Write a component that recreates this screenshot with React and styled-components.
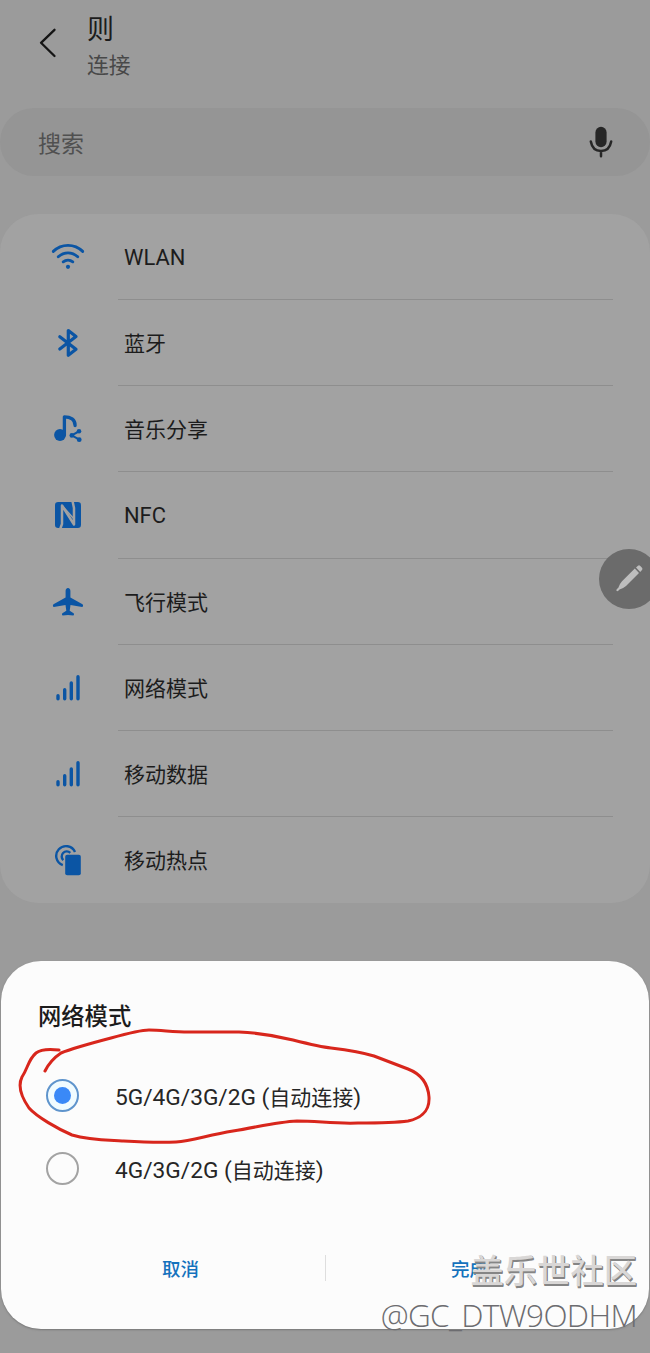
import styled, { createGlobalStyle } from "styled-components";

const BLUE = "#0b55a4";

const items = [
  { label: "WLAN", Icon: WifiIcon, latin: true },
  { label: "蓝牙", Icon: BluetoothIcon },
  { label: "音乐分享", Icon: MusicShareIcon },
  { label: "NFC", Icon: NfcIcon, latin: true },
  { label: "飞行模式", Icon: PlaneIcon },
  { label: "网络模式", Icon: SignalIcon },
  { label: "移动数据", Icon: SignalIcon },
  { label: "移动热点", Icon: HotspotIcon },
];

export default function App() {
  return (
    <Screen>
      <GlobalStyle />
      <Header>
        <BackIcon />
        <div>
          <Title>则</Title>
          <Subtitle>连接</Subtitle>
        </div>
      </Header>
      <SearchBar>
        <span>搜索</span>
        <MicIcon />
      </SearchBar>
      <List>
        {items.map(({ label, Icon, latin }) => (
          <Row key={label}>
            <IconBox>
              <Icon />
            </IconBox>
            <RowLabel $latin={latin}>{label}</RowLabel>
          </Row>
        ))}
      </List>
      <Dialog>
        <DialogTitle>网络模式</DialogTitle>
        <Option>
          <Radio $checked />
          <span>
            5G/4G/3G/2G (<small>自动连接</small>)
          </span>
        </Option>
        <Option>
          <Radio />
          <span>
            4G/3G/2G (<small>自动连接</small>)
          </span>
        </Option>
        <Actions>
          <Action>取消</Action>
          <Divider />
          <Action>完成</Action>
        </Actions>
        <Marker />
      </Dialog>
      <EditBubble>
        <PenIcon />
      </EditBubble>
      <Watermark>
        <WatermarkName>盖乐世社区</WatermarkName>
        <WatermarkUser>@GC_DTW9ODHM</WatermarkUser>
      </Watermark>
    </Screen>
  );
}

function BackIcon() {
  return (
    <svg width="18" height="30" viewBox="0 0 18 30" fill="none" stroke="#151515" strokeWidth="2.3" strokeLinecap="round" strokeLinejoin="round">
      <path d="M15.500 1.800 2 14.800 15.500 28" />
    </svg>
  );
}

function MicIcon() {
  return (
    <svg width="24" height="32" viewBox="0 0 24 32" fill="none">
      <rect x="6.400" y="0.800" width="11.200" height="20.400" rx="5.600" fill="#262626" />
      <path d="M1.800 15.500C3 22 7 25 12 25s9-3 10.200-9.500M12 25v5.300" stroke="#262626" strokeWidth="2.500" strokeLinecap="round" />
    </svg>
  );
}

function WifiIcon() {
  return (
    <svg width="34" height="28" viewBox="0 0 34 28" fill="none" stroke={BLUE} strokeWidth="2.900" strokeLinecap="round">
      <path d="M2.300 8.400C10.500.4 23.500.4 31.700 8.400" />
      <path d="M7.300 13.800C13 8.600 21 8.600 26.700 13.800" />
      <path d="M12.200 18.800C15 16.600 19 16.600 21.800 18.800" />
      <circle cx="17" cy="23.800" r="2.100" fill={BLUE} stroke="none" />
    </svg>
  );
}

function BluetoothIcon() {
  return (
    <svg width="24" height="30" viewBox="0 0 24 30" fill="none" stroke={BLUE} strokeWidth="3.200" strokeLinecap="round" strokeLinejoin="round">
      <path d="M3.800 8.800 20 21.300 12.300 27.300V2.500L20 8.500 3.800 21" />
    </svg>
  );
}

function MusicShareIcon() {
  return (
    <svg width="30" height="30" viewBox="0 0 30 30" fill="none" stroke={BLUE}>
      <circle cx="7" cy="21" r="5.900" fill={BLUE} stroke="none" />
      <path d="M11.400 21V2.800C17.500 2.800 22.300 5.500 22.100 11.500" strokeWidth="3.300" strokeLinejoin="round" strokeLinecap="round" />
      <path d="M26 17.300 18.800 21.300 26.300 25.600" strokeWidth="2.100" />
      <g fill={BLUE} stroke="none">
        <circle cx="26" cy="17.300" r="2.300" />
        <circle cx="18.800" cy="21.400" r="2.300" />
        <circle cx="26.200" cy="25.700" r="2.400" />
      </g>
    </svg>
  );
}

function NfcIcon() {
  return (
    <svg width="28" height="28" viewBox="0 0 28 28">
      <rect x="1" y="1" width="26" height="26" rx="3.200" fill={BLUE} />
      <path d="M6.200 28 8 23V4.500L20 23.500V7L18.500 0" fill="none" stroke="#a2a2a2" strokeWidth="2.500" strokeLinejoin="round" />
      <path d="M8 4.500 20 18" fill="none" stroke="#a2a2a2" strokeWidth="1.500" />
    </svg>
  );
}

function PlaneIcon() {
  return (
    <svg width="32" height="30" viewBox="0 0 32 30" fill={BLUE}>
      <path d="M16 1c-1.500 0-2.400 1.400-2.400 3v6.600L1.500 17.300c-.9.600-.7 2.700.3 2.600l11.700-1.900.8 5.800-3.900 2.500c-.7.500-.5 2.200.3 2.100l5.300-.5 5.300.5c.8.100 1-1.600.3-2.100L17.700 23.800l.8-5.800 11.700 1.900c1 .1 1.200-2 .3-2.600l-12.100-6.700V4c0-1.600-.9-3-2.400-3Z" />
    </svg>
  );
}

function SignalIcon() {
  return (
    <svg width="26" height="28" viewBox="0 0 26 28" stroke={BLUE} strokeWidth="3.400" strokeLinecap="round">
      <path d="M3 24.800V21.800M9.700 24.800V15.800M16.300 24.800V9M23 24.800V2.800" />
    </svg>
  );
}

function HotspotIcon() {
  return (
    <svg width="28" height="32" viewBox="0 0 28 32" fill="none" stroke={BLUE}>
      <path d="M8.800 21.200A9.800 9.800 0 1 1 21 8" strokeWidth="2.400" />
      <path d="M9.300 16.200A5 5 0 1 1 16.300 8.800" strokeWidth="2.400" />
      <rect x="11.200" y="10.800" width="15.600" height="20.400" rx="2" fill={BLUE} stroke="none" />
    </svg>
  );
}

function PenIcon() {
  return (
    <svg width="30" height="30" viewBox="0 0 30 30" fill="#bebebe">
      <path d="M20.800 4.600 25 9 12 22Q9.500 24.200 5.500 25.600L3.800 27.200 2.300 26.700 2.800 25 4.200 24Q5.500 20 8 17.300Z" />
      <path d="M22 3.500 24 1.700Q25.200.9 26.300 2L28 3.800Q29 5 28 6L26.200 7.900Z" />
    </svg>
  );
}

// hand-drawn circle round the first option
function Marker() {
  return (
    <MarkerSvg viewBox="0 0 420 124">
      <path
        d="M27 46C31 38 37 32 43 28C55 23 74 18 93 13C111 8 122 5 131 5C144 5 154 7 171 7H221C242 8 259 11 275 15C291 19 303 22 313 23C329 25 343 27 356 31L390 44C403 49 410 59 411 72C412 88 400 94 390 96C376 98 359 98 340 98C318 99 299 96 279 96C259 97 240 102 215 106C190 110 174 116 158 117C139 118 122 117 104 116C86 115 71 115 54 110C40 104 19 92 11 83C2 70 0 60 4 52C10 43 10 35 18 28C23 24 33 24 41 25"
        fill="none"
        stroke="#d8261c"
        strokeWidth="3"
        strokeLinecap="round"
        strokeLinejoin="round"
      />
    </MarkerSvg>
  );
}

const GlobalStyle = createGlobalStyle`
  body {
    margin: 0;
    background: #9b9b9b;
  }

  * {
    box-sizing: border-box;
  }

  svg {
    display: block;
    flex-shrink: 0;
  }
`;

const Screen = styled.div`
  position: relative;
  width: 650px;
  height: 1353px;
  overflow: hidden;
  background: #9b9b9b;
  color: #1c1c1c;
  font-family: Roboto, "Noto Sans CJK SC", sans-serif;
`;

const Header = styled.header`
  display: flex;
  gap: 30px;
  height: 108px;
  padding: 13px 0 0 39px;

  > svg {
    margin-top: 15px;
  }
`;

const Title = styled.div`
  font-size: 27px;
  line-height: 35px;
`;

const Subtitle = styled.div`
  color: #484848;
  font-size: 21.800px;
  line-height: 35px;
`;

const SearchBar = styled.div`
  display: flex;
  align-items: center;
  justify-content: space-between;
  height: 68px;
  padding: 0 37px 0 38px;
  border-radius: 34px;
  background: #959595;
  color: #505050;
  font-size: 23px;
`;

const List = styled.div`
  height: 689px;
  margin-top: 38px;
  border-radius: 38px;
  background: #a2a2a2;
`;

const Row = styled.div`
  display: flex;
  height: 86.150px;
`;

const IconBox = styled.div`
  display: flex;
  align-items: center;
  justify-content: center;
  width: 82px;
  margin-left: 27px;
`;

const RowLabel = styled.div`
  display: flex;
  align-items: center;
  width: 495px;
  margin-left: 9px;
  padding: ${({ $latin }) => ($latin ? "2px 0 0 6px" : "0 0 1px 6px")};
  border-bottom: 1px solid #8e8e8e;
  font-size: ${({ $latin }) => ($latin ? "21.900px" : "21px")};

  ${Row}:last-child & {
    border-bottom-color: transparent;
  }
`;

const Dialog = styled.div`
  position: relative;
  height: 368px;
  margin: 58px 1px 0;
  padding-top: 36px;
  border-radius: 40px;
  background: #fcfcfc;
  box-shadow: 0 1px 2px #777;
`;

const DialogTitle = styled.div`
  height: 62px;
  padding-left: 37px;
  font-size: 23.300px;
  font-weight: 500;
  line-height: 40px;
`;

const Option = styled.div`
  display: flex;
  align-items: center;
  gap: 36px;
  height: 73px;
  padding-left: 45px;
  color: #262626;
  font-size: 22.700px;

  small {
    font-size: 21px;
  }
`;

const Radio = styled.div`
  display: flex;
  align-items: center;
  justify-content: center;
  width: 33px;
  height: 33px;
  border: 2px solid ${({ $checked }) => ($checked ? "#5f94cc" : "#a3a3a3")};
  border-radius: 50%;
  background: ${({ $checked }) => ($checked ? "#f0fbff" : "transparent")};

  &::after {
    content: "";
    width: 17px;
    height: 17px;
    border-radius: 50%;
    background: ${({ $checked }) => ($checked ? "#3a89f7" : "transparent")};
  }
`;

const Actions = styled.div`
  display: flex;
  align-items: center;
  justify-content: center;
  height: 40px;
  margin-top: 43px;
`;

const Action = styled.div`
  width: 288px;
  color: #1472bd;
  font-size: 18.500px;
  font-weight: 500;
  text-align: center;
`;

const Divider = styled.div`
  width: 1px;
  height: 26px;
  background: #dedede;
`;

const MarkerSvg = styled.svg`
  position: absolute;
  top: 64px;
  left: 17px;
  width: 420px;
  height: 124px;
`;

const EditBubble = styled.div`
  position: absolute;
  top: 549px;
  left: 598.500px;
  display: flex;
  align-items: center;
  justify-content: center;
  width: 60px;
  height: 60px;
  border-radius: 50%;
  background: #6b6b6b;
`;

const Watermark = styled.div`
  position: absolute;
  right: 13px;
  bottom: 16px;
  display: flex;
  flex-direction: column;
  align-items: flex-end;
  white-space: nowrap;
`;

const WatermarkName = styled.div`
  color: #d9d7d6;
  font-size: 33.300px;
  font-weight: 500;
  line-height: 43px;
  text-shadow: 1px 1px 0 #858585, 1px 2px 0 #858585;
`;

const WatermarkUser = styled.div`
  color: #6c6c70;
  font-family: "Open Sans", "Noto Sans", sans-serif;
  font-size: 31.500px;
  font-weight: 300;
  letter-spacing: -0.650px;
  line-height: 44px;
`;
